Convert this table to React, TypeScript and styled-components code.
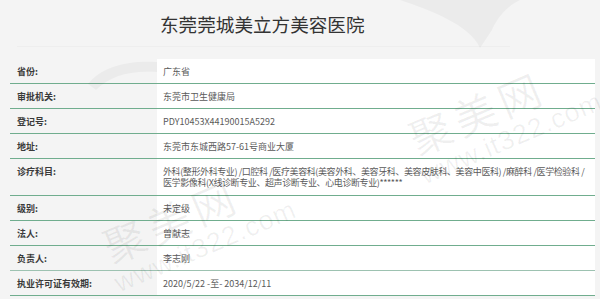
import React from 'react';
import styled, { createGlobalStyle } from 'styled-components';

const GlobalStyle = createGlobalStyle`
    html, body {
        margin: 0;
        padding: 0;
        background: #f4f4f4;
    }
    body {
        font-family: "Noto Sans CJK SC", "Noto Sans", sans-serif;
    }
`;

const Page = styled.div`
    position: relative;
    width: 600px;
    height: 299px;
    overflow: hidden;
    background: #f4f4f4;
`;

const Header = styled.div`
    height: 47px;
    margin: 0 90px 0 17px;
    border-bottom: 1px solid #eeeeee;
    box-sizing: border-box;
`;

const Title = styled.h1`
    margin: 0;
    padding: 13px 0 0 143px;
    font-size: 18.6px;
    line-height: 22px;
    font-weight: 400;
    color: #333;
`;

const Table = styled.div`
    margin: 12px 5px 0 10px;
`;

const Row = styled.div<{ $faint?: boolean }>`
    display: grid;
    grid-template-columns: 147px 1fr;
    border-bottom: 1px solid ${p => (p.$faint ? '#9dc2b1' : '#70ad8e')};
`;

const Label = styled.div`
    padding: 7px 0 6px 7px;
    font-size: 9px;
    line-height: 11px;
    font-weight: 700;
    color: #3a3a3a;
`;

const Value = styled.div<{ $tall?: boolean }>`
    background: #fff;
    padding: 7px 4px ${p => (p.$tall ? '7px' : '6px')} 6px;
    font-size: 9px;
    line-height: 11px;
    color: #5a5a5a;
`;

const Line = styled.span`
    display: block;
    white-space: nowrap;
    letter-spacing: -0.4px;
`;

const Watermark = styled.div<{ $x: number; $y: number }>`
    position: absolute;
    left: ${p => p.$x}px;
    top: ${p => p.$y}px;
    transform: rotate(-23deg);
    transform-origin: left top;
    color: rgba(0, 0, 0, 0.06);
    pointer-events: none;
    font-family: "Noto Sans CJK SC", sans-serif;
    white-space: nowrap;
`;

const MarkName = styled.div`
    font-size: 42px;
    line-height: 46px;
    letter-spacing: 6px;
    padding-left: 4px;
`;

const MarkSite = styled.div`
    font-family: "Liberation Sans", Arial, sans-serif;
    font-size: 27px;
    line-height: 30px;
    letter-spacing: 1px;
`;

const Swoosh = styled.svg`
    position: absolute;
    left: 0;
    top: 0;
    pointer-events: none;
`;

const rows: { label: string; value: React.ReactNode; faint?: boolean; tall?: boolean }[] = [
    { label: '省份:', value: '广东省' },
    { label: '审批机关:', value: '东莞市卫生健康局' },
    { label: '登记号:', value: 'PDY10453X44190015A5292' },
    { label: '地址:', value: '东莞市东城西路57-61号商业大厦' },
    {
        label: '诊疗科目:',
        tall: true,
        value: (
            <>
                <Line>外科(整形外科专业) /口腔科 /医疗美容科(美容外科、美容牙科、美容皮肤科、美容中医科) /麻醉科 /医学检验科 /</Line>
                <Line>医学影像科(X线诊断专业、超声诊断专业、心电诊断专业)******</Line>
            </>
        ),
    },
    { label: '级别:', value: '未定级' },
    { label: '法人:', value: '曾献志' },
    { label: '负责人:', value: '李志刚', faint: true },
    { label: '执业许可证有效期:', value: '2020/5/22 -至- 2034/12/11' },
];

export default function App() {
    return (
        <>
            <GlobalStyle />
            <Page>
                <Header>
                    <Title>东莞莞城美立方美容医院</Title>
                </Header>
                <Table>
                    {rows.map((row, index) => (
                        <Row key={index} $faint={row.faint}>
                            <Label>{row.label}</Label>
                            <Value $tall={row.tall}>{row.value}</Value>
                        </Row>
                    ))}
                </Table>

                <Swoosh width="600" height="299" viewBox="0 0 600 299">
                    <path
                        d="M400 0 C430 10 470 25 480 48 L492 30 C500 12 512 4 520 0 Z"
                        fill="rgba(0,0,0,0.035)"
                    />
                    <path
                        d="M88 84 C100 68 125 60 157 62 L157 72 C130 70 110 76 96 90 Z"
                        fill="rgba(0,0,0,0.035)"
                    />
                </Swoosh>

                <Watermark $x={398} $y={120}>
                    <MarkName>聚美网</MarkName>
                    <MarkSite>www.it322.com</MarkSite>
                </Watermark>
                <Watermark $x={92} $y={228}>
                    <MarkName>聚美网</MarkName>
                    <MarkSite>www.it322.com</MarkSite>
                </Watermark>
            </Page>
        </>
    );
}
